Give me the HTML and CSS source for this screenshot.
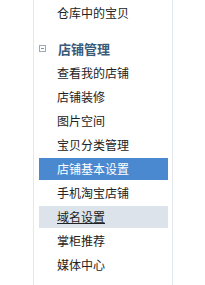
FILE: index.html
```html
<!DOCTYPE html>
<html lang="zh-CN">
<head>
    <meta charset="UTF-8">
    <title>店铺管理</title>
    <link rel="stylesheet" href="styles.css">
</head>
<body>
    <div class="sidebar">
        <ul class="menu">
            <li><a href="#">仓库中的宝贝</a></li>
        </ul>
        <div class="menu-title"><span class="toggle"></span>店铺管理</div>
        <ul class="menu">
            <li><a href="#">查看我的店铺</a></li>
            <li><a href="#">店铺装修</a></li>
            <li><a href="#">图片空间</a></li>
            <li><a href="#">宝贝分类管理</a></li>
            <li class="active"><a href="#">店铺基本设置</a></li>
            <li><a href="#">手机淘宝店铺</a></li>
            <li class="hover"><a href="#">域名设置</a></li>
            <li><a href="#">掌柜推荐</a></li>
            <li><a href="#">媒体中心</a></li>
        </ul>
    </div>
</body>
</html>
```
FILE: styles.css
```css
body {
    margin: 0;
    background-color: #fff;
    font-family: "Noto Sans CJK SC", "Liberation Sans", sans-serif;
    font-size: 12px;
    color: #222;
}
.sidebar {
    margin-left: 33px;
    width: 138px;
    height: 285px;
    border-left: 1px solid #e3e8ee;
    border-right: 1px solid #e3e8ee;
}
.menu {
    list-style: none;
    margin: 0;
    padding: 2px 4px 0 5px;
}
.menu li {
    height: 22px;
    line-height: 22px;
    margin-bottom: 2px;
}
.menu li a {
    display: block;
    padding-left: 18px;
    color: #222;
    text-decoration: none;
}
.menu li.active {
    background-color: #4a89cf;
}
.menu li.active a {
    color: #fff;
}
.menu li.hover {
    background-color: #dde3eb;
}
.menu li.hover a {
    text-decoration: underline;
}
.menu-title {
    display: flex;
    align-items: center;
    height: 24px;
    margin-top: 12px;
    padding-left: 5px;
    font-size: 13px;
    font-weight: bold;
    color: #3a5b7a;
}
.toggle {
    position: relative;
    width: 5px;
    height: 5px;
    border: 1px solid #9aabbc;
    margin-right: 12px;
}
.toggle::after {
    content: "";
    position: absolute;
    left: 1px;
    top: 2px;
    width: 3px;
    height: 1px;
    background-color: #7f93a8;
}
```
